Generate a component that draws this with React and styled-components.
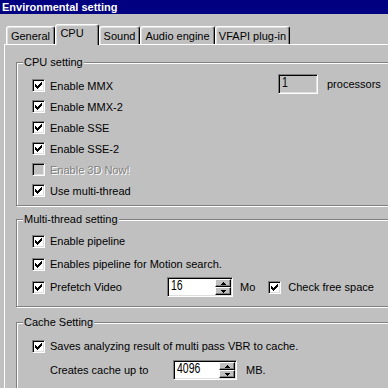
import React from "react";
import styled, { createGlobalStyle, css } from "styled-components";

const GlobalStyle = createGlobalStyle`
  html, body { margin: 0; padding: 0; background: #c0c0c0; overflow: hidden; }
  body { font-family: "Liberation Sans", Arial, sans-serif; font-size: 11px; color: #000; }
  #root { width: 388px; height: 388px; overflow: hidden; }
`;

const Window = styled.div`
  width: 388px;
  height: 388px;
  overflow: hidden;
  display: flex;
  flex-direction: column;
  align-items: flex-start;
  background: #c0c0c0;
`;

const TitleBar = styled.div`
  flex: none;
  align-self: stretch;
  height: 14px;
  line-height: 14px;
  padding-left: 2px;
  background: #000080;
  color: #fff;
  font-weight: bold;
  white-space: nowrap;
`;

const TabRow = styled.div`
  flex: none;
  height: 30px;
  display: flex;
  align-items: flex-end;
  padding-left: 6px;
  position: relative;
  z-index: 2;
`;

const Tab = styled.div`
  box-sizing: border-box;
  flex: none;
  width: ${(p) => p.$w}px;
  margin-left: ${(p) => p.$ml || 0}px;
  height: 18px;
  display: flex;
  align-items: center;
  justify-content: center;
  border: 1px solid;
  border-bottom: none;
  border-color: #fff #000 transparent #fff;
  border-radius: 3px 3px 0 0;
  box-shadow: inset -1px 0 #808080, inset 1px 1px #dfdfdf;
  background: #c0c0c0;
  white-space: nowrap;
  ${(p) =>
    p.$active &&
    css`
      height: 21px;
      margin-bottom: -1px;
      padding: 0 10px 5px 0;
    `}
`;

const Page = styled.div`
  flex: 1;
  width: 420px;
  margin-left: 4px;
  border-top: 1px solid #fff;
  border-left: 1px solid #fff;
  padding: 17px 0 0 11px;
  position: relative;
  z-index: 1;
`;

const Group = styled.section`
  position: relative;
  box-sizing: border-box;
  width: 400px;
  height: ${(p) => p.$h}px;
  margin-top: ${(p) => p.$mt || 0}px;
  padding: ${(p) => p.$pad};
  border: 1px solid #808080;
  box-shadow: inset 1px 1px #fff, 1px 1px #fff;
`;

const GroupLabel = styled.span`
  position: absolute;
  top: -7px;
  left: 6px;
  padding: 0 1px;
  line-height: 13px;
  background: #c0c0c0;
  white-space: nowrap;
`;

const CpuGrid = styled.div`
  display: grid;
  grid-template-columns: 246px auto;
  align-items: start;
`;

const Column = styled.div`
  display: flex;
  flex-direction: column;
  gap: ${(p) => p.$gap || 0}px;
`;

const Row = styled.div`
  display: flex;
  align-items: center;
  height: ${(p) => p.$h}px;
  white-space: nowrap;
`;

const Option = styled.label`
  flex: none;
  display: flex;
  align-items: center;
  gap: ${(p) => (p.$gap == null ? 5 : p.$gap)}px;
  width: ${(p) => (p.$w ? `${p.$w}px` : "auto")};
  margin-left: ${(p) => p.$ml || 0}px;
  color: ${(p) => (p.$disabled ? "#808080" : "#000")};
  text-shadow: ${(p) => (p.$disabled ? "1px 1px 0 #fff" : "none")};
`;

const Box = styled.span`
  flex: none;
  box-sizing: border-box;
  width: 13px;
  height: 13px;
  display: flex;
  align-items: center;
  justify-content: center;
  border: 1px solid;
  border-color: #808080 #fff #fff #808080;
  box-shadow: inset 1px 1px #000, inset -1px -1px #dfdfdf;
  background: ${(p) => (p.$disabled ? "#c0c0c0" : "#fff")};
`;

const Caption = styled.span`
  flex: none;
  width: ${(p) => (p.$w ? `${p.$w}px` : "auto")};
  padding-left: ${(p) => p.$pl || 0}px;
  margin-left: ${(p) => p.$ml || 0}px;
`;

const Edit = styled.div`
  box-sizing: border-box;
  flex: none;
  width: ${(p) => p.$w}px;
  height: 20px;
  display: flex;
  align-items: flex-start;
  border: 1px solid;
  border-color: #808080 #fff #fff #808080;
  box-shadow: inset 1px 1px #000, inset -1px -1px #dfdfdf;
  background: ${(p) => (p.$disabled ? "#c0c0c0" : "#fff")};
  padding: 1px 1px 1px 3px;
`;

const EditText = styled.span`
  flex: 1;
  font-size: 14px;
  line-height: 13px;
  transform: scaleX(0.75);
  transform-origin: left center;
  white-space: nowrap;
`;

const Spin = styled.span`
  flex: none;
  width: 16px;
  height: 16px;
  display: flex;
  flex-direction: column;
`;

const SpinButton = styled.span`
  box-sizing: border-box;
  height: 8px;
  display: flex;
  align-items: center;
  justify-content: center;
  background: #c0c0c0;
  border: 1px solid;
  border-color: #fff #000 #000 #fff;
  box-shadow: inset -1px -1px #808080;
`;

const ProcWrap = styled.div`
  display: flex;
  align-items: center;
  gap: 9px;
  margin-top: -1px;
`;

const CheckMark = () => (
  <svg width="7" height="7" viewBox="0 0 7 7" shapeRendering="crispEdges">
    <path
      fill="#000"
      d="M6 0h1v1h-1z M5 1h2v1h-2z M0 2h1v1h-1z M4 2h3v1h-3z M0 3h2v1h-2z M3 3h3v1h-3z M0 4h5v1h-5z M1 5h3v1h-3z M2 6h1v1h-1z"
    />
  </svg>
);

const Arrow = ({ down }) => (
  <svg width="5" height="3" viewBox="0 0 5 3" shapeRendering="crispEdges">
    <path
      fill="#000"
      d={down ? "M0 0h5v1h-5z M1 1h3v1h-3z M2 2h1v1h-1z" : "M2 0h1v1h-1z M1 1h3v1h-3z M0 2h5v1h-5z"}
    />
  </svg>
);

const Check = ({ label, checked = true, disabled, w, gap, ml }) => (
  <Option $disabled={disabled} $w={w} $gap={gap} $ml={ml}>
    <Box $disabled={disabled}>{checked && !disabled && <CheckMark />}</Box>
    <span>{label}</span>
  </Option>
);

const SpinEdit = ({ value, w }) => (
  <Edit $w={w}>
    <EditText>{value}</EditText>
    <Spin>
      <SpinButton>
        <Arrow />
      </SpinButton>
      <SpinButton>
        <Arrow down />
      </SpinButton>
    </Spin>
  </Edit>
);

const cpuOptions = [
  { label: "Enable MMX" },
  { label: "Enable MMX-2" },
  { label: "Enable SSE" },
  { label: "Enable SSE-2" },
  { label: "Enable 3D Now!", disabled: true, checked: false },
  { label: "Use multi-thread" },
];

const tabs = [
  { label: "General", w: 49 },
  { label: "CPU", w: 44, active: true },
  { label: "Sound", w: 41 },
  { label: "Audio engine", w: 75 },
  { label: "VFAPI plug-in", w: 75 },
];

export default function App() {
  return (
    <>
      <GlobalStyle />
      <Window>
        <TitleBar>Environmental setting</TitleBar>
        <TabRow>
          {tabs.map((t) => (
            <Tab key={t.label} $w={t.w} $active={t.active}>
              {t.label}
            </Tab>
          ))}
        </TabRow>
        <Page>
          <Group $h={144} $pad="12px 0 4px 15px">
            <GroupLabel>CPU setting</GroupLabel>
            <CpuGrid>
              <Column>
                {cpuOptions.map((o) => (
                  <Row key={o.label} $h={21}>
                    <Check label={o.label} disabled={o.disabled} checked={o.checked !== false} />
                  </Row>
                ))}
              </Column>
              <ProcWrap>
                <Edit $w={40} $disabled>
                  <EditText>1</EditText>
                </Edit>
                <span>processors</span>
              </ProcWrap>
            </CpuGrid>
          </Group>

          <Group $h={88} $mt={13} $pad="10px 0 8px 15px">
            <GroupLabel>Multi-thread setting</GroupLabel>
            <Column $gap={1}>
              <Row $h={22}>
                <Check label="Enable pipeline" />
              </Row>
              <Row $h={22}>
                <Check label="Enables pipeline for Motion search." />
              </Row>
              <Row $h={22}>
                <Check label="Prefetch Video" w={135} />
                <SpinEdit value="16" w={66} />
                <Caption $ml={7}>Mo</Caption>
                <Check label="Check free space" ml={13} gap={7} />
              </Row>
            </Column>
          </Group>

          <Group $h={110} $mt={15} $pad="12px 0 0 15px">
            <GroupLabel>Cache Setting</GroupLabel>
            <Column $gap={2}>
              <Row $h={22}>
                <Check label="Saves analyzing result of multi pass VBR to cache." />
              </Row>
              <Row $h={22}>
                <Caption $w={123} $pl={18}>Creates cache up to</Caption>
                <SpinEdit value="4096" w={64} />
                <Caption $ml={9}>MB.</Caption>
              </Row>
            </Column>
          </Group>
        </Page>
      </Window>
    </>
  );
}
